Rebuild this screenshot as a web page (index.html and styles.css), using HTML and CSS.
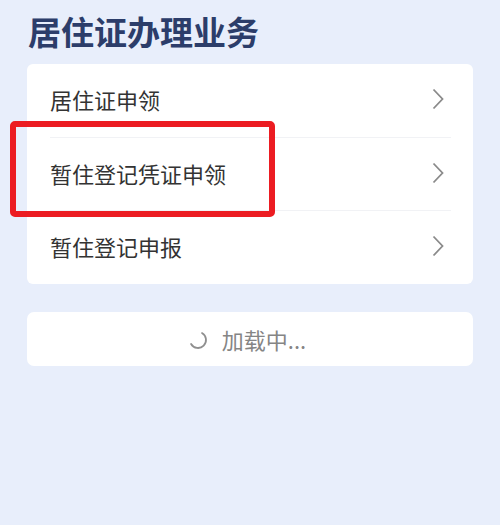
FILE: index.html
```html
<!DOCTYPE html>
<html lang="zh-CN">
<head>
<meta charset="UTF-8">
<meta name="viewport" content="width=device-width, initial-scale=1.0">
<title>居住证办理业务</title>
<link rel="stylesheet" href="styles.css">
</head>
<body>
  <div class="page">
    <h1>居住证办理业务</h1>
    <div class="card">
      <div class="row">
        <span>居住证申领</span>
        <svg class="arrow" width="12" height="22" viewBox="0 0 12 22"><path d="M1.5 1.5 L10.5 11 L1.5 20.5" fill="none" stroke="#8a8a8a" stroke-width="1.8"/></svg>
      </div>
      <div class="row">
        <span>暂住登记凭证申领</span>
        <svg class="arrow" width="12" height="22" viewBox="0 0 12 22"><path d="M1.5 1.5 L10.5 11 L1.5 20.5" fill="none" stroke="#8a8a8a" stroke-width="1.8"/></svg>
      </div>
      <div class="row">
        <span>暂住登记申报</span>
        <svg class="arrow" width="12" height="22" viewBox="0 0 12 22"><path d="M1.5 1.5 L10.5 11 L1.5 20.5" fill="none" stroke="#8a8a8a" stroke-width="1.8"/></svg>
      </div>
      <!-- 标注框 -->
      <div class="mark"></div>
    </div>
    <div class="loading">
      <svg class="spin" width="20" height="20" viewBox="0 0 20 20"><path d="M14 3.07 A8 8 0 1 1 3.07 14" fill="none" stroke="#8f8f8f" stroke-width="1.8" stroke-linecap="round"/></svg>
      <span>加载中...</span>
    </div>
  </div>
</body>
</html>
```

FILE: styles.css
```css
body {
  margin: 0;
  padding: 0;
  background-color: #e8eefb;
  font-family: "Noto Sans CJK SC", "Noto Sans", sans-serif;
  color: #333;
}
.page {
  padding: 11px 27px 0;
}
h1 {
  margin: 0 0 13px 1px;
  font-size: 33px;
  line-height: 40px;
  font-weight: bold;
  color: #2c3d6a;
}
.card {
  position: relative;
  padding-bottom: 1px;
  background-color: #fff;
  border-radius: 6px;
}
.row {
  display: flex;
  align-items: center;
  justify-content: space-between;
  height: 73px;
  margin: 0 22px 0 23px;
  padding-right: 7px;
  padding-bottom: 3px;
  box-sizing: border-box;
  font-size: 22px;
  color: #333;
}
.row + .row {
  border-top: 1px solid #f1f2f5;
}
.mark {
  position: absolute;
  left: -17px;
  top: 57px;
  width: 253px;
  height: 84px;
  border: 6px solid #ec1c22;
  border-radius: 5px;
}
.loading {
  display: flex;
  align-items: center;
  justify-content: center;
  gap: 14px;
  height: 54px;
  margin-top: 28px;
  padding-right: 6px;
  background-color: #fff;
  border-radius: 7px;
  font-size: 22px;
  color: #858585;
}
.spin {
  margin-top: 1px;
}
```
